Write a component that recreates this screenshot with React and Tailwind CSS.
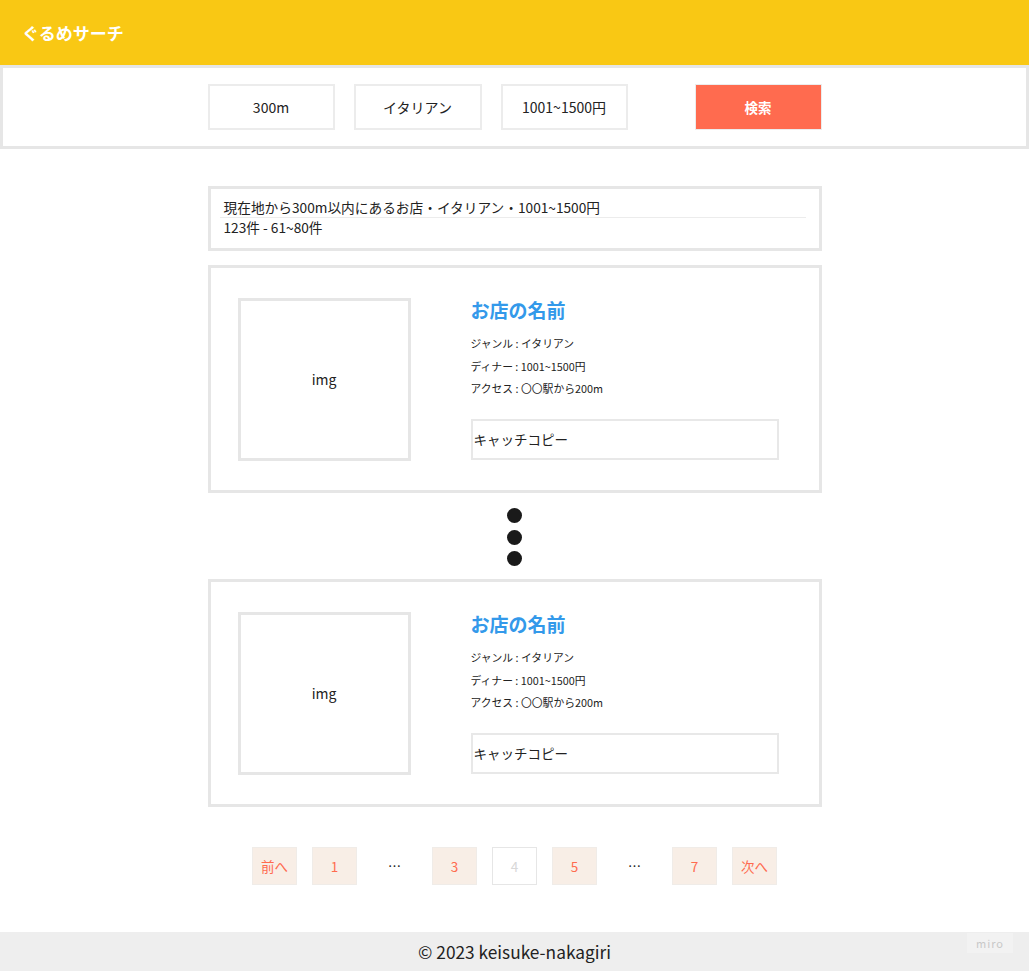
import React from 'react';

const font = { fontFamily: '"Noto Sans CJK JP", "Noto Sans", sans-serif' };

function ShopCard() {
  return (
    <div className="border-[3px] border-[#e6e6e6] bg-white pl-[27px] pr-[40px] pt-[30px] pb-[29px] flex">
      <div className="w-[173px] h-[163px] border-[3px] border-[#e6e6e6] flex items-center justify-center text-[14px] text-[#222]">
        img
      </div>
      <div className="ml-[60px] flex-1 flex flex-col">
        <h2 className="text-[19px] font-bold text-[#3399ea] leading-[26px] -mt-[1px]">お店の名前</h2>
        <div className="mt-[9px] text-[10.8px] text-[#222] leading-[22.5px]">
          <p>ジャンル : イタリアン</p>
          <p>ディナー : 1001~1500円</p>
          <p>アクセス : 〇〇駅から200m</p>
        </div>
        <div className="mt-[19px] h-[41px] border-2 border-[#e8e8e8] flex items-center pl-[1px] text-[13.5px] text-[#222]">
          キャッチコピー
        </div>
      </div>
    </div>
  );
}

function PageBox({ children, active }) {
  return (
    <div
      className={`w-[45px] h-[38px] flex items-center justify-center text-[13.5px] border ${
        active ? 'bg-white border-[#e6e6e6] text-[#d8d8d8]' : 'bg-[#f8eee6] border-[#f0ece8] text-[#ff6b4f]'
      }`}
    >
      {children}
    </div>
  );
}

export default function App() {
  return (
    <div className="min-h-[971px] bg-white flex flex-col" style={font}>
      {/* Header */}
      <header className="h-[65px] bg-[#f9c814] flex items-center px-[22px]">
        <h1 className="text-[17px] font-bold text-white">ぐるめサーチ</h1>
      </header>

      {/* Search bar */}
      <div className="h-[84px] border-[3px] border-[#e6e6e6] flex items-center justify-center">
        <div className="w-[614px] flex items-center gap-[19px] text-[14px] text-[#222]">
          <div className="w-[127px] h-[46px] border-2 border-[#ececec] flex items-center justify-center">300m</div>
          <div className="w-[128px] h-[46px] border-2 border-[#ececec] flex items-center justify-center">イタリアン</div>
          <div className="w-[127px] h-[46px] border-2 border-[#ececec] flex items-center justify-center">1001~1500円</div>
          <button className="ml-auto w-[127px] h-[46px] bg-[#ff6b4f] border border-[#ececec] text-white font-bold text-[13.5px]">
            検索
          </button>
        </div>
      </div>

      {/* Main */}
      <main className="w-[614px] mx-auto mt-[37px] flex flex-col">
        <div className="h-[65px] border-[3px] border-[#e6e6e6] px-[13px] pt-[9px] text-[13.7px] text-[#222] leading-[19px]">
          <p className="border-b border-[#ececec] -ml-[4px] pl-[4px]">現在地から300m以内にあるお店・イタリアン・1001~1500円</p>
          <p>123件 - 61~80件</p>
        </div>

        <div className="mt-[14px]">
          <ShopCard />
        </div>

        <div className="flex flex-col items-center gap-[6.5px] mt-[15px] mb-[13px]">
          <span className="w-[15px] h-[15px] rounded-full bg-[#1a1a1a]" />
          <span className="w-[15px] h-[15px] rounded-full bg-[#1a1a1a]" />
          <span className="w-[15px] h-[15px] rounded-full bg-[#1a1a1a]" />
        </div>

        <ShopCard />

        {/* Pagination */}
        <div className="mt-[40px] flex justify-center gap-[15px]">
          <PageBox>前へ</PageBox>
          <PageBox>1</PageBox>
          <div className="w-[45px] h-[38px] flex items-center justify-center text-[13px] text-[#222]">…</div>
          <PageBox>3</PageBox>
          <PageBox active>4</PageBox>
          <PageBox>5</PageBox>
          <div className="w-[45px] h-[38px] flex items-center justify-center text-[13px] text-[#222]">…</div>
          <PageBox>7</PageBox>
          <PageBox>次へ</PageBox>
        </div>
      </main>

      {/* Footer */}
      <footer className="mt-auto h-[39px] bg-[#eeeeee] relative flex items-center justify-center text-[17.3px] text-[#222]">
        © 2023 keisuke-nakagiri
        <span className="absolute right-[16px] top-[1px] w-[46px] h-[20px] bg-[#f2f2f2] flex items-center justify-center text-[11px] tracking-[1px] text-[#c8c8c8]">
          miro
        </span>
      </footer>
    </div>
  );
}
